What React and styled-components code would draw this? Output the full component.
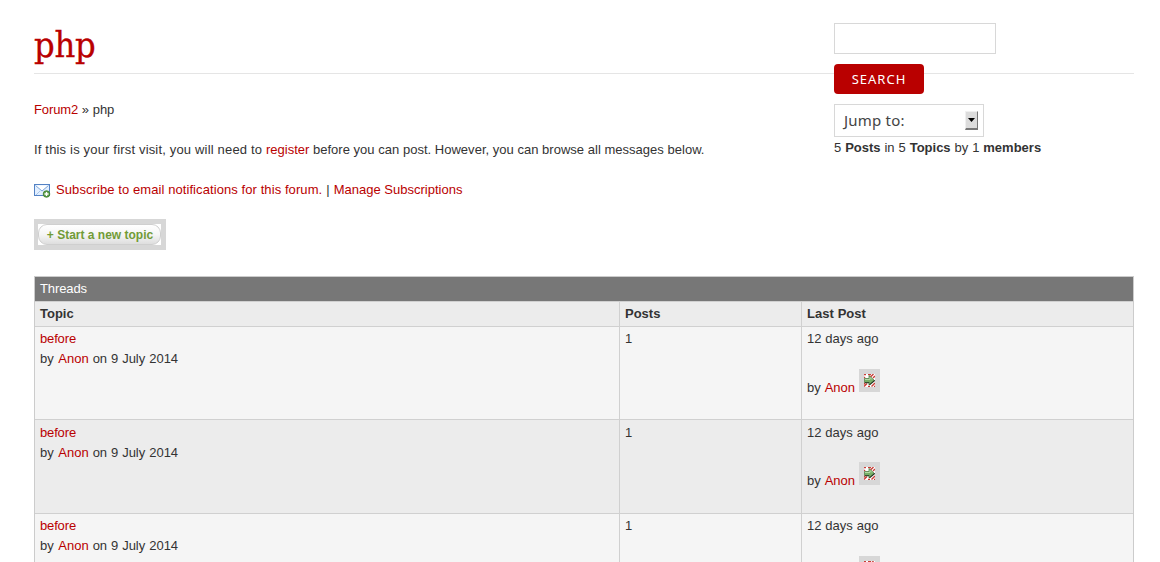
import React from "react";
import styled, { createGlobalStyle } from "styled-components";

const GlobalStyle = createGlobalStyle`
  html, body { margin: 0; height: 562px; overflow: hidden; background: #fff; }
  body { font: 13px/20px "Liberation Sans", Arial, sans-serif; color: #333; }
  * { box-sizing: border-box; }
  svg { display: block; }
`;

const Page = styled.main`
  position: relative;
  height: 562px;
  padding: 0 26px 0 34px;
  overflow: hidden;
`;

const Title = styled.h1`
  margin: 0 0 26px;
  height: 74px;
  padding-top: 22px;
  border-bottom: 1px solid #e5e5e5;
  color: #b90000;
  font: 400 36px/46px "DejaVu Serif Condensed", "DejaVu Serif", serif;
  font-stretch: condensed;
  letter-spacing: -0.3px;
  -webkit-text-stroke: 0.3px #b90000;
`;

const Line = styled.p`
  display: flex;
  align-items: center;
  height: 20px;
  margin: 0 0 20px;
  white-space: pre;
`;

const Text = styled.span`
  letter-spacing: ${(p) => p.$track || 0}px;
`;

const Link = styled.a`
  color: #b90000;
  letter-spacing: ${(p) => p.$track || 0}px;
  text-decoration: none;
`;

const MailSlot = styled.span`
  width: 22px;
`;

const Sidebar = styled.aside`
  position: absolute;
  top: 23px;
  left: 834px;
  width: 300px;
`;

const SearchInput = styled.input`
  display: block;
  width: 162px;
  height: 31px;
  margin: 0 0 10px;
  border: 1px solid #d8d8d8;
  background: #fff;
`;

const SearchButton = styled.button`
  display: block;
  width: 90px;
  height: 30px;
  margin: 0 0 10px;
  padding: 0;
  border: 0;
  border-radius: 4px;
  background: #b90000;
  color: #fff;
  font: 13px/30px "Noto Sans", sans-serif;
  letter-spacing: 1px;
`;

const JumpSelect = styled.div`
  display: flex;
  align-items: center;
  justify-content: space-between;
  width: 150px;
  height: 33px;
  padding: 0 5px 0 9px;
  border: 1px solid #d8d8d8;
  background: #fff;
  color: #444;
  font: 15px/31px "Noto Sans", sans-serif;
  letter-spacing: 0.2px;
`;

const Stepper = styled.span`
  display: flex;
  align-items: center;
  justify-content: center;
  width: 13px;
  height: 19px;
  border: 1px solid #f0f0f0;
  border-right: 1px solid #777;
  border-bottom: 2px solid #777;
  background: #dcdcdc;
`;

const Stats = styled.p`
  margin: 1px 0 0;
  word-spacing: 0.3px;
`;

const TopicButton = styled.a`
  display: flex;
  width: 132px;
  height: 31px;
  margin-top: -1px;
  padding: 5px;
  padding-left: 4px;
  background: #d7d7d7;
`;

const TopicPlate = styled.span`
  width: 123px;
  height: 21px;
  background: #fff;
`;

const TopicPill = styled.span`
  display: block;
  height: 21px;
  padding-left: 1px;
  border: 1px solid #cfcfcf;
  border-radius: 9px;
  background: linear-gradient(#fff, #f5f5f5 50%, #dedede);
  color: #719b37;
  font-size: 12px;
  font-weight: 700;
  line-height: 20px;
  text-align: center;
  white-space: nowrap;
`;

const Table = styled.section`
  width: 1100px;
  margin-top: 26px;
  border: 1px solid #ccc;
`;

const TableTitle = styled.header`
  height: 24px;
  padding: 2px 5px;
  background: #777;
  color: #fff;
  letter-spacing: -0.1px;
`;

const Row = styled.div`
  display: grid;
  grid-template-columns: 584px 182px 332px;
  height: ${(p) => p.$height}px;
  border-top: 1px solid #d0d0d0;
  background: ${(p) => (p.$shade ? "#ececec" : "#f5f5f5")};
  font-weight: ${(p) => (p.$head ? 700 : 400)};
`;

const Cell = styled.div`
  padding: ${(p) => p.$top || 2}px 5px 0;
  word-spacing: 0.3px;
  & + & { border-left: 1px solid #d0d0d0; }
`;

const Poster = styled.div`
  display: flex;
  align-items: flex-start;
  gap: 4px;
  margin-top: ${(p) => p.$gap}px;
`;

const By = styled.span`
  word-spacing: 1px;
`;

const PosterName = styled(By)`
  width: 48px;
  padding-top: 9px;
  white-space: nowrap;
`;

const ArrowFrame = styled.a`
  width: 21px;
  height: 23px;
  padding: 5px;
  background: #d7d7d7;
`;

const MailIcon = () => (
  <svg width="17" height="15" viewBox="0 0 17 15">
    <rect x=".5" y="1.5" width="15" height="11" fill="#e2efff" stroke="#5382c4" />
    <path d="M2 12l4-4M14 12l-4-4" fill="none" stroke="#a9c6ea" />
    <path d="M1.500 2.500h13L8 8z" fill="#fff" />
    <path d="M1.500 2.500L8 8l6.500-5.500" fill="none" stroke="#7da5d8" />
    <circle cx="12.5" cy="11" r="3.3" fill="#5f9e4a" stroke="#397c2b" strokeWidth=".8" />
    <path d="M10.500 11h4M12.500 9v4" stroke="#fff" strokeWidth="1.3" />
  </svg>
);

const ArrowIcon = () => (
  <svg width="11" height="13" viewBox="0 0 11 13">
    <rect width="11" height="13" fill="#fff" />
    <path
      d="M0 .5h2M4 .5h3M0 4l1-1M6.500 3L9.500 0M9 4l2-2M0 12.500l3-3M4 12.500h2M7.500 12.500L11 9M10 12.500h1M.5 8.500v2"
      fill="none" stroke="#c93c36" strokeWidth="1.4"
    />
    <path d="M.5 4.500H5V1.500l5.500 5L5 11V8.500H.5z" fill="#76af66" stroke="#577d4c" strokeWidth=".8" />
    <path d="M1 5.500h5V3.500l2 2" fill="none" stroke="#b3d9a4" />
    <path d="M1 8.800h4.200M5.500 10.800L10.700 6.500" fill="none" stroke="#263522" strokeWidth="1.1" />
  </svg>
);

const SelectArrow = () => (
  <svg width="7" height="4" viewBox="0 0 7 4">
    <path d="M0 0h7L3.500 4z" fill="#000" />
  </svg>
);

const threads = [
  { height: 93, top: 2, gap: 20 },
  { height: 94, top: 3, gap: 19 },
  { height: 93, top: 2, gap: 20 },
];

export default function App() {
  return (
    <>
      <GlobalStyle />
      <Page>
        <Title>php</Title>
        <Line><Link $track={-0.1}>Forum2</Link> » php</Line>
        <Line>
          <Text $track={0.174}>If this is your first visit, you will need to </Text>
          <Link>register</Link>
          <Text $track={0.02}> before you can post. However, you can browse all messages below.</Text>
        </Line>
        <Line>
          <MailSlot><MailIcon /></MailSlot>
          <Link $track={0.083}>Subscribe to email notifications for this forum.</Link>
          <Text $track={0.3}> | </Text>
          <Link>Manage Subscriptions</Link>
        </Line>
        <TopicButton>
          <TopicPlate><TopicPill>+ Start a new topic</TopicPill></TopicPlate>
        </TopicButton>
        <Table>
          <TableTitle>Threads</TableTitle>
          <Row $height={25} $shade $head>
            <Cell>Topic</Cell><Cell>Posts</Cell><Cell>Last Post</Cell>
          </Row>
          {threads.map((t, i) => (
            <Row key={i} $height={t.height} $shade={i % 2 === 1}>
              <Cell $top={t.top}>
                <Link $track={-0.15}>before</Link><br /><By>by </By><Link>Anon</Link> on 9 July 2014
              </Cell>
              <Cell $top={t.top}>1</Cell>
              <Cell $top={t.top}>
                12 days ago
                <Poster $gap={t.gap}>
                  <PosterName>by <Link>Anon</Link></PosterName>
                  <ArrowFrame><ArrowIcon /></ArrowFrame>
                </Poster>
              </Cell>
            </Row>
          ))}
        </Table>
        <Sidebar>
          <SearchInput />
          <SearchButton>SEARCH</SearchButton>
          <JumpSelect>Jump to:<Stepper><SelectArrow /></Stepper></JumpSelect>
          <Stats>5 <b>Posts</b> in 5 <b>Topics</b> by 1 <b>members</b></Stats>
        </Sidebar>
      </Page>
    </>
  );
}
